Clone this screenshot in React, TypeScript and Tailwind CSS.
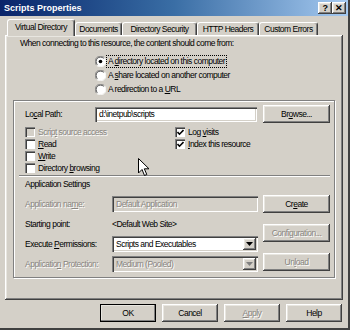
import React from 'react';

const raised = 'shadow-[inset_-1px_-1px_0_#404040,inset_1px_1px_0_#ffffff,inset_-2px_-2px_0_#808080,inset_2px_2px_0_#e8e6e0]';
const sunken = 'shadow-[inset_1px_1px_0_#808080,inset_2px_2px_0_#404040,inset_-1px_-1px_0_#ffffff,inset_-2px_-2px_0_#d4d0c8]';
const grayText = 'text-[#888580] [text-shadow:1px_1px_0_#ffffff]';

function Btn({ children, disabled, isDefault, w = 'w-[67px]' }: { children: React.ReactNode; disabled?: boolean; isDefault?: boolean; w?: string }) {
  return (
    <div
      className={`${w} h-[18px] shrink-0 flex items-center justify-center bg-[#d4d0c8] ${raised} ${
        isDefault ? 'outline outline-1 outline-black -outline-offset-1' : ''
      } ${disabled ? grayText : ''}`}
    >
      <span>{children}</span>
    </div>
  );
}

function TitleBtn({ children }: { children: React.ReactNode }) {
  return (
    <div className={`w-[14px] h-[12px] flex items-center justify-center bg-[#d4d0c8] ${raised} font-bold text-[9px] leading-none text-black`}>
      {children}
    </div>
  );
}

function Radio({ checked, focus, children }: { checked?: boolean; focus?: boolean; children: React.ReactNode }) {
  return (
    <div className="h-[14px] flex items-center">
      <svg width="11" height="11" viewBox="0 0 12 12" className="shrink-0">
        <circle cx="6" cy="6" r="5.5" fill="#ffffff" />
        <path d="M10.2 1.8 A5.9 5.9 0 0 0 1.8 10.2" stroke="#808080" strokeWidth="1" fill="none" />
        <path d="M1.8 10.2 A5.9 5.9 0 0 0 10.2 1.8" stroke="#ffffff" strokeWidth="1" fill="none" />
        <path d="M9.4 2.6 A4.8 4.8 0 0 0 2.6 9.4" stroke="#404040" strokeWidth="1" fill="none" />
        {checked && <circle cx="6" cy="6" r="2" fill="#000000" />}
      </svg>
      <span className={`ml-[1px] px-[1px] leading-[11px] ${focus ? 'outline outline-1 outline-dotted outline-black' : 'outline outline-1 outline-transparent'}`}>
        {children}
      </span>
    </div>
  );
}

function Check({ checked, disabled, children }: { checked?: boolean; disabled?: boolean; children: React.ReactNode }) {
  return (
    <div className="h-[12px] flex items-center">
      <span
        className={`w-[10px] h-[10px] shrink-0 flex items-center justify-center ${
          disabled ? 'bg-[#d4d0c8]' : 'bg-white'
        } shadow-[inset_1px_1px_0_#808080,inset_2px_2px_0_#404040,inset_-1px_-1px_0_#ffffff]`}
      >
        {checked && (
          <svg width="7" height="7" viewBox="0 0 7 7">
            <path d="M0.5 3 L2.5 5.2 L6.5 1" stroke="#000000" strokeWidth="1.6" fill="none" />
          </svg>
        )}
      </span>
      <span className={`ml-[3px] ${disabled ? grayText : ''}`}>{children}</span>
    </div>
  );
}

function Combo({ value, disabled }: { value: string; disabled?: boolean }) {
  return (
    <div className={`w-[146px] h-[16px] flex items-center ${disabled ? 'bg-[#d4d0c8]' : 'bg-white'} ${sunken}`}>
      <span className={`pl-[4px] flex-1 ${disabled ? grayText : ''}`}>{value}</span>
      <div className={`w-[13px] h-[12px] mr-[2px] flex items-center justify-center bg-[#d4d0c8] ${raised}`}>
        <svg width="7" height="4" viewBox="0 0 7 4">
          <path d="M0 0 H7 L3.5 4 Z" fill={disabled ? '#808080' : '#000000'} />
        </svg>
      </div>
    </div>
  );
}

function Tab({ children, w, active }: { children: React.ReactNode; w: string; active?: boolean }) {
  return (
    <div
      className={`${w} ${
        active ? 'h-[17px] -mb-[1px] relative z-10 pb-[2px]' : 'h-[13px]'
      } flex items-center justify-center whitespace-nowrap bg-[#d4d0c8] border-t border-l border-white border-r border-r-[#404040] rounded-t-[3px] shadow-[inset_-1px_0_0_#808080]`}
    >
      {children}
    </div>
  );
}

export default function App() {
  return (
    <div className="relative w-[350px] h-[330px] bg-[#d4d0c8] overflow-hidden flex flex-col font-['Liberation_Sans',Arial,sans-serif] text-[8.5px] tracking-[-0.5px] leading-[12px] text-black border-r-2 border-b-2 border-r-[#404040] border-b-[#404040]">
      {/* title bar */}
      <div className="h-[16px] shrink-0 flex items-center pl-[4px] pr-[2px] bg-gradient-to-r from-[#0a246a] via-[#3a6ea5] to-[#a6caf0]">
        <span className="font-bold text-white text-[9px] tracking-normal">Scripts Properties</span>
        <div className="ml-auto flex">
          <TitleBtn>?</TitleBtn>
          <TitleBtn>✕</TitleBtn>
        </div>
      </div>

      {/* tabs */}
      <div className="mt-[3px] h-[16px] shrink-0 flex items-end pl-[7px]">
        <Tab w="w-[68px]" active>
          Virtual Directory
        </Tab>
        <Tab w="w-[47px]">Documents</Tab>
        <Tab w="w-[75px]">Directory Security</Tab>
        <Tab w="w-[62px]">HTTP Headers</Tab>
        <Tab w="w-[59px]">Custom Errors</Tab>
      </div>

      {/* tab page */}
      <div className={`ml-[5px] w-[338px] h-[265px] shrink-0 flex flex-col pt-[2px] ${raised}`}>
        <div className="pl-[15px]">When connecting to this resource, the content should come from:</div>

        <div className="mt-[5px] pl-[90px] flex flex-col">
          <Radio checked focus>
            A <u>d</u>irectory located on this computer
          </Radio>
          <Radio>
            A <u>s</u>hare located on another computer
          </Radio>
          <Radio>
            A redirection to a <u>U</u>RL
          </Radio>
        </div>

        {/* group */}
        <div className="mt-[4px] ml-[8px] w-[322px] h-[178px] flex flex-col pl-[11px] pt-[4px] border border-[#808080] shadow-[inset_1px_1px_0_#ffffff,1px_1px_0_#ffffff]">
          <div className="h-[18px] flex items-center">
            <span className="w-[70px]">
              Lo<u>c</u>al Path:
            </span>
            <div className={`w-[162px] h-[15px] flex items-center bg-white pl-[4px] ${sunken}`}>d:\inetpub\scripts</div>
            <div className="ml-[6px]">
              <Btn>
                Br<u>o</u>wse...
              </Btn>
            </div>
          </div>

          <div className="mt-[3px] grid grid-cols-[150px_auto]">
            <Check disabled>
              Scrip<u>t</u> source access
            </Check>
            <Check checked>
              Log <u>v</u>isits
            </Check>
            <Check>
              <u>R</u>ead
            </Check>
            <Check checked>
              <u>I</u>ndex this resource
            </Check>
            <Check>
              <u>W</u>rite
            </Check>
            <div />
            <Check>
              Directory <u>b</u>rowsing
            </Check>
            <div />
          </div>

          <div className="mt-[1px] -ml-[6px] w-[311px] h-[2px] border-t border-[#808080] border-b border-b-white" />
          <div className="mt-[1px]">Application Settings</div>

          <div className="mt-[4px] flex">
            <div className="w-[238px] flex flex-col">
              <div className="h-[20px] flex items-center">
                <span className={`w-[87px] ${grayText}`}>
                  Application na<u>m</u>e:
                </span>
                <div className={`w-[146px] h-[16px] flex items-center pl-[4px] bg-[#d4d0c8] ${sunken}`}>
                  <span className={grayText}>Default Application</span>
                </div>
              </div>
              <div className="h-[20px] flex items-center">
                <span className="w-[87px]">Starting point:</span>
                <span>&lt;Default Web Site&gt;</span>
              </div>
              <div className="h-[20px] flex items-center">
                <span className="w-[87px]">
                  Execute <u>P</u>ermissions:
                </span>
                <Combo value="Scripts and Executables" />
              </div>
              <div className="h-[20px] flex items-center">
                <span className={`w-[87px] ${grayText}`}>
                  Applicatio<u>n</u> Protection:
                </span>
                <Combo value="Medium (Pooled)" disabled />
              </div>
            </div>
            <div className="flex flex-col">
              <div className="mt-[1px]">
                <Btn>
                  Cr<u>e</u>ate
                </Btn>
              </div>
              <div className="mt-[11px]">
                <Btn disabled>
                  Confi<u>g</u>uration...
                </Btn>
              </div>
              <div className="mt-[11px]">
                <Btn disabled>
                  Un<u>l</u>oad
                </Btn>
              </div>
            </div>
          </div>
        </div>
      </div>

      {/* dialog buttons */}
      <div className="mt-[4px] flex justify-end gap-[6px] pr-[6px]">
        <Btn w="w-[56px]" isDefault>
          OK
        </Btn>
        <Btn w="w-[56px]">Cancel</Btn>
        <Btn w="w-[56px]" disabled>
          <u>A</u>pply
        </Btn>
        <Btn w="w-[56px]">Help</Btn>
      </div>

      {/* mouse pointer */}
      <svg className="absolute left-[138px] top-[158px]" width="12" height="19" viewBox="0 0 12 19">
        <path d="M0.5 0.5 L0.5 15 L4 11.5 L6.5 17.5 L8.8 16.5 L6.3 10.8 L11 10.8 Z" fill="#ffffff" stroke="#000000" strokeWidth="1" />
      </svg>
    </div>
  );
}
